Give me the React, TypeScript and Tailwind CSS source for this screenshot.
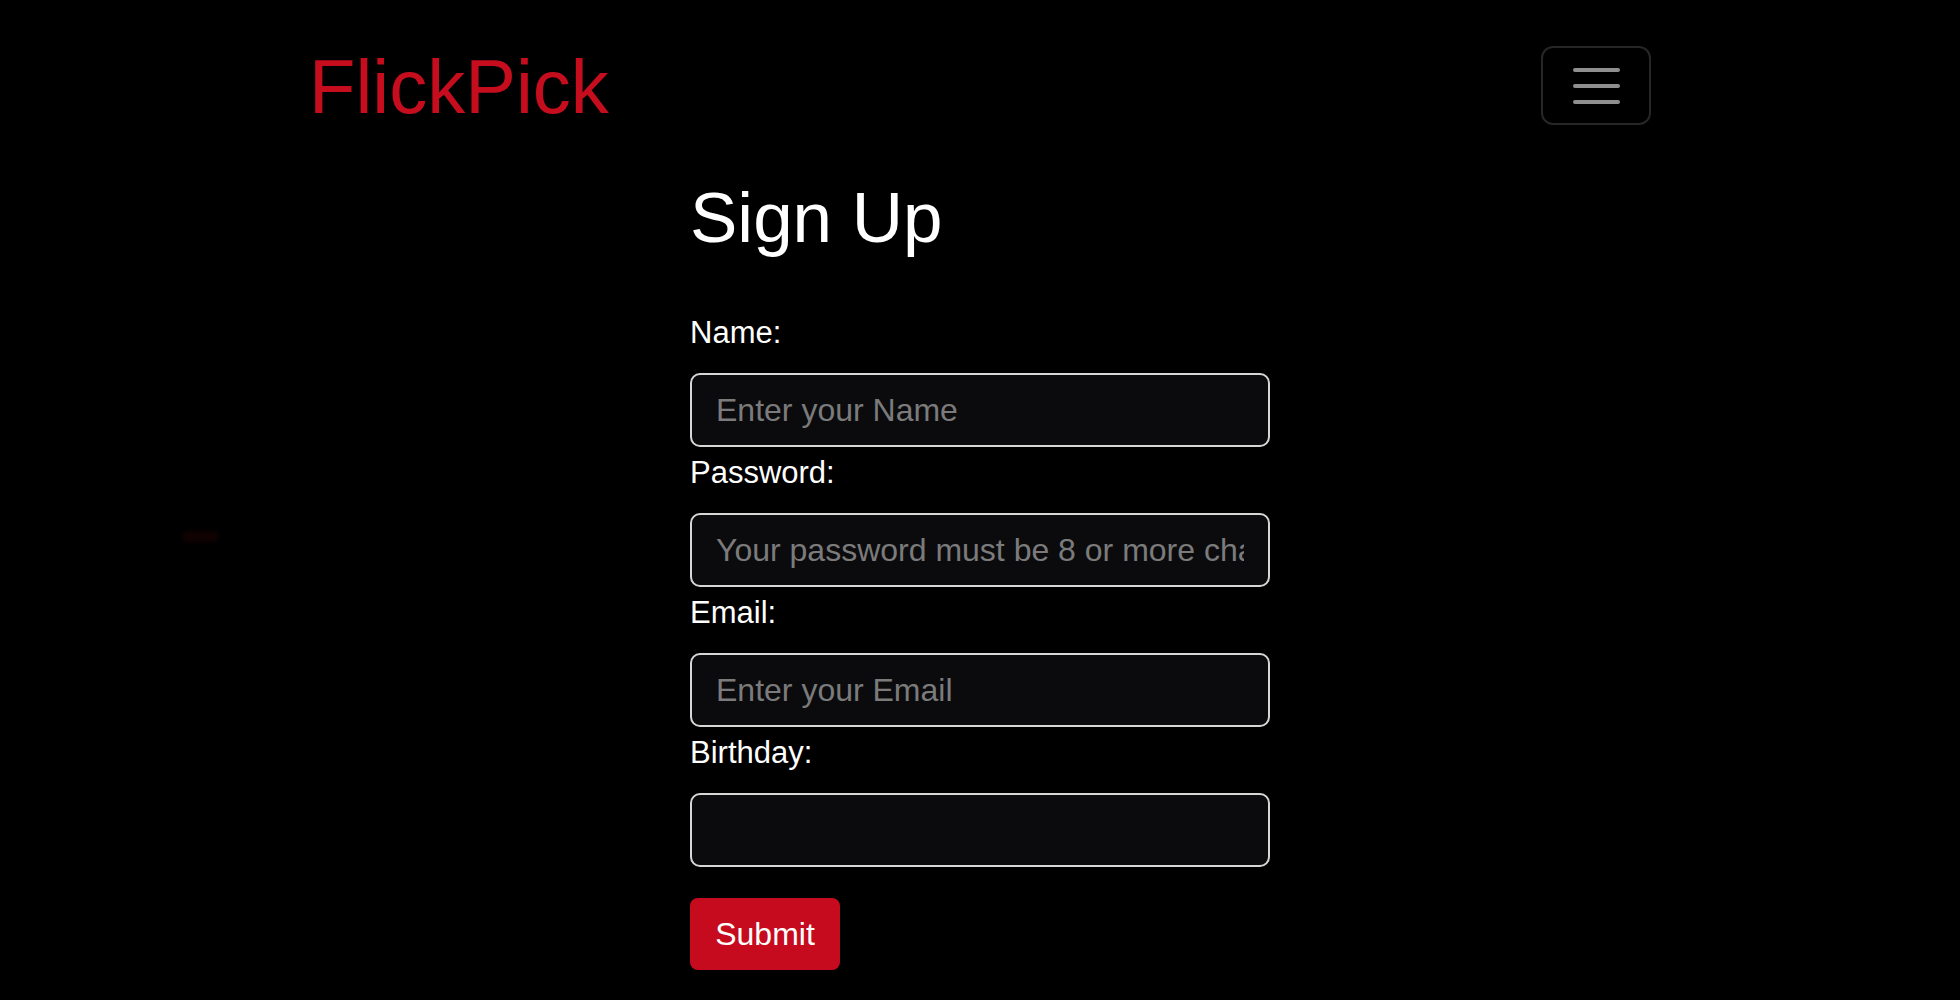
import React from "react";

const font = { fontFamily: '"Liberation Sans", Arial, sans-serif' };

function Field({ label, placeholder, type, first }: { label: string; placeholder?: string; type: string; first?: boolean }) {
  return (
    <div className="flex flex-col">
      <label className={`${first ? "" : "mt-[3px]"} mb-[18px] block text-[31px] leading-[45px] text-white`}>{label}</label>
      <input
        type={type}
        placeholder={placeholder}
        className="h-[74px] w-full rounded-[10px] border-2 border-[#d6d6d6] bg-[#0b0b0e] px-[24px] text-[32px] text-white outline-none placeholder:text-[#7b7b7b]"
      />
    </div>
  );
}

export default function App() {
  return (
    <div className="relative min-h-[1000px] w-full bg-black" style={font}>
      <header className="mx-auto flex w-[1342px] items-start justify-between pt-[46px]">
        <div className="mt-[3px] text-[76px] leading-[76px] text-[#c60d1e]">FlickPick</div>
        <button className="flex h-[79px] w-[110px] flex-col items-center justify-center gap-[12px] rounded-[12px] border-2 border-[#262626] bg-black">
          <span className="block h-[4px] w-[47px] rounded-full bg-[#8f8f8f]" />
          <span className="block h-[4px] w-[47px] rounded-full bg-[#8f8f8f]" />
          <span className="block h-[4px] w-[47px] rounded-full bg-[#8f8f8f]" />
        </button>
      </header>
      <main className="mx-auto w-[580px] pt-[57px]">
        <h1 className="text-[71px] leading-[71px] text-white">Sign Up</h1>
        <form className="mt-[57px] flex flex-col" onSubmit={(e) => e.preventDefault()}>
          <Field first label="Name:" placeholder="Enter your Name" type="text" />
          <Field label="Password:" placeholder="Your password must be 8 or more characters" type="password" />
          <Field label="Email:" placeholder="Enter your Email" type="email" />
          <Field label="Birthday:" type="text" />
          <div className="mt-[31px]">
            <button type="submit" className="flex h-[72px] w-[150px] items-center justify-center rounded-[8px] bg-[#c50b1d] text-[32px] text-white">
              Submit
            </button>
          </div>
        </form>
      </main>
      <div className="absolute left-[182px] top-[531px] h-[11px] w-[37px] rounded-full bg-[#100203] blur-[2px]" />
    </div>
  );
}
